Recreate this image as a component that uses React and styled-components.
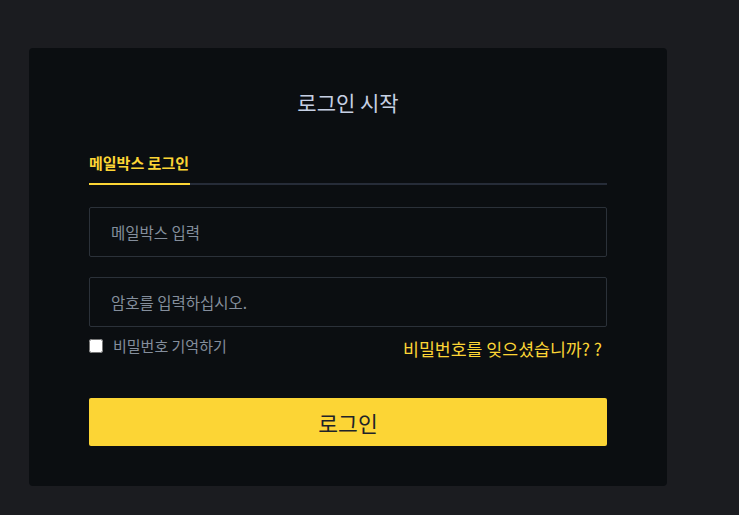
import React, { useState } from "react";
import styled, { createGlobalStyle } from "styled-components";

const GlobalStyle = createGlobalStyle`
  html, body {
    margin: 0;
    padding: 0;
    background: #1b1c20;
    font-family: "Noto Sans CJK KR", "Noto Sans", sans-serif;
  }
`;

const Page = styled.div`
  min-height: 515px;
  padding: 48px 72px 30px 29px;
  box-sizing: border-box;
`;

const Card = styled.div`
  width: 638px;
  box-sizing: border-box;
  background: #0b0e11;
  border-radius: 4px;
  padding: 36px 60px 40px;
`;

const Title = styled.h2`
  margin: 0;
  text-align: center;
  font-size: 21px;
  font-weight: 400;
  line-height: 36px;
  color: #c6d0e4;
`;

const Tabs = styled.div`
  margin-top: 33px;
  display: flex;
  border-bottom: 2px solid #262c38;
`;

const Tab = styled.div`
  padding-bottom: 10px;
  font-size: 15px;
  font-weight: 700;
  line-height: 20px;
  color: #fcd535;
  border-bottom: 2px solid #fcd535;
  margin-bottom: -2px;
  width: 101px;
  white-space: nowrap;
`;

const Form = styled.form`
  margin-top: 22px;
  display: flex;
  flex-direction: column;
  gap: 20px;
`;

const Input = styled.input`
  height: 50px;
  box-sizing: border-box;
  background: transparent;
  border: 1px solid #2b3139;
  border-radius: 2px;
  padding: 0 21px;
  font-family: inherit;
  font-size: 15.5px;
  color: #eaecef;
  outline: none;
  &::placeholder {
    color: #848e9c;
  }
`;

const OptionsRow = styled.div`
  margin-top: -11px;
  display: flex;
  justify-content: space-between;
  align-items: flex-start;
`;

const Remember = styled.label`
  display: flex;
  align-items: center;
  gap: 10px;
  font-size: 15px;
  line-height: 20px;
  color: #848e9c;
`;

const Check = styled.input`
  margin: 0;
  width: 14px;
  height: 14px;
  accent-color: #fcd535;
`;

const Forgot = styled.a`
  margin-top: 2px;
  margin-right: 5px;
  font-size: 17.3px;
  line-height: 22px;
  color: #fcd535;
  text-decoration: none;
  cursor: pointer;
`;

const SubmitButton = styled.button`
  margin-top: 18px;
  height: 48px;
  border: 0;
  border-radius: 2px;
  background: #fcd535;
  color: #1e2329;
  font-family: inherit;
  font-size: 21.5px;
  cursor: pointer;
`;

export default function App() {
  const [remember, setRemember] = useState(false);
  return (
    <>
      <GlobalStyle />
      <Page>
        <Card>
          <Title>로그인 시작</Title>
          <Tabs>
            <Tab>메일박스 로그인</Tab>
          </Tabs>
          <Form onSubmit={(e) => e.preventDefault()}>
            <Input type="text" placeholder="메일박스 입력" />
            <Input type="password" placeholder="암호를 입력하십시오." />
            <OptionsRow>
              <Remember>
                <Check
                  type="checkbox"
                  checked={remember}
                  onChange={(e) => setRemember(e.target.checked)}
                />
                비밀번호 기억하기
              </Remember>
              <Forgot>비밀번호를 잊으셨습니까? ?</Forgot>
            </OptionsRow>
            <SubmitButton type="submit">로그인</SubmitButton>
          </Form>
        </Card>
      </Page>
    </>
  );
}
